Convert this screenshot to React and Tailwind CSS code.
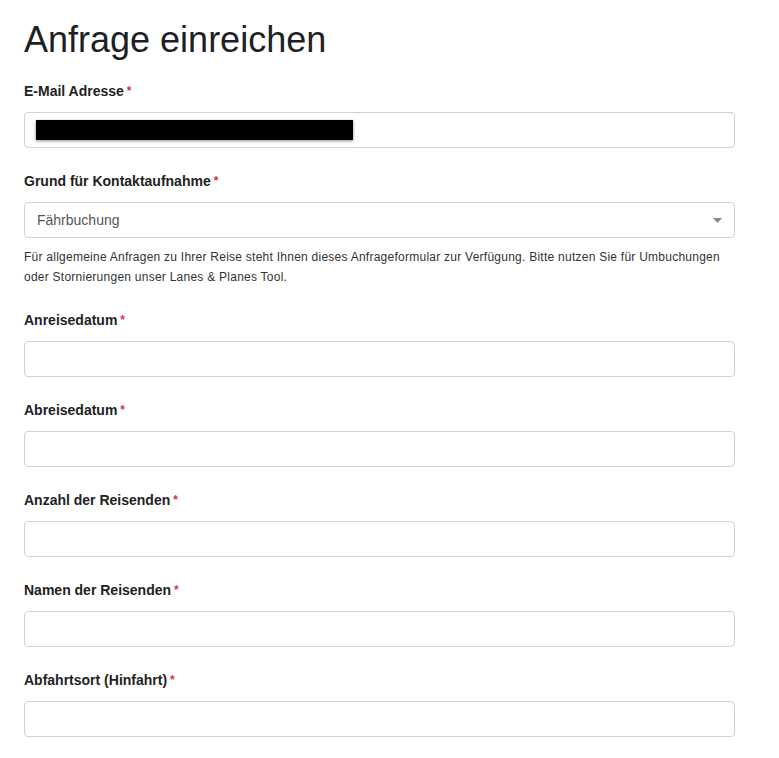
const fields = [
  "Anreisedatum",
  "Abreisedatum",
  "Anzahl der Reisenden",
  "Namen der Reisenden",
  "Abfahrtsort (Hinfahrt)",
];

function Label({ children }) {
  return (
    <label className="block h-5 text-[14px] leading-5 font-bold text-[#222]">
      {children}
      <span className="ml-[3px] text-[12px] align-top text-[#d9363e]">*</span>
    </label>
  );
}

function Field({ label }) {
  return (
    <div className="mb-[23px]">
      <Label>{label}</Label>
      <input
        type="text"
        className="mt-[11px] block h-9 w-full rounded border border-[#d2d2d2] bg-white px-3 text-[14px] outline-none"
      />
    </div>
  );
}

export default function App() {
  return (
    <div
      className="min-h-screen bg-white pt-[20px] pl-6 pr-[44px] text-[#222]"
      style={{ fontFamily: '"Liberation Sans", Arial, sans-serif' }}
    >
      <h1 className="h-10 text-[36px] leading-10 text-[#1d2125]">Anfrage einreichen</h1>

      <div className="mt-[21px] mb-[23px]">
        <Label>E-Mail Adresse</Label>
        <div className="mt-[11px] flex h-9 w-full items-center rounded border border-[#d2d2d2] bg-white px-[11px]">
          <span className="block h-5 w-[317px] bg-black shadow-[0_1px_3px_rgba(0,0,0,0.45)]" />
        </div>
      </div>

      <div className="mb-[23px]">
        <Label>Grund für Kontaktaufnahme</Label>
        <div className="mt-[11px] flex h-9 w-full items-center justify-between rounded border border-[#d2d2d2] bg-white pl-3 pr-[12px]">
          <span className="text-[14px] text-[#555]">Fährbuchung</span>
          <svg width="9" height="5" viewBox="0 0 9 5" className="mt-px">
            <path d="M0 0h9L4.5 5z" fill="#8a8a8a" />
          </svg>
        </div>
        <p className="mt-[9px] text-[12px] leading-5 tracking-[0.25px] text-[#333]">
          Für allgemeine Anfragen zu Ihrer Reise steht Ihnen dieses Anfrageformular zur Verfügung. Bitte nutzen Sie für Umbuchungen oder Stornierungen unser Lanes &amp; Planes Tool.
        </p>
      </div>

      {fields.map((f) => (
        <Field key={f} label={f} />
      ))}
    </div>
  );
}
